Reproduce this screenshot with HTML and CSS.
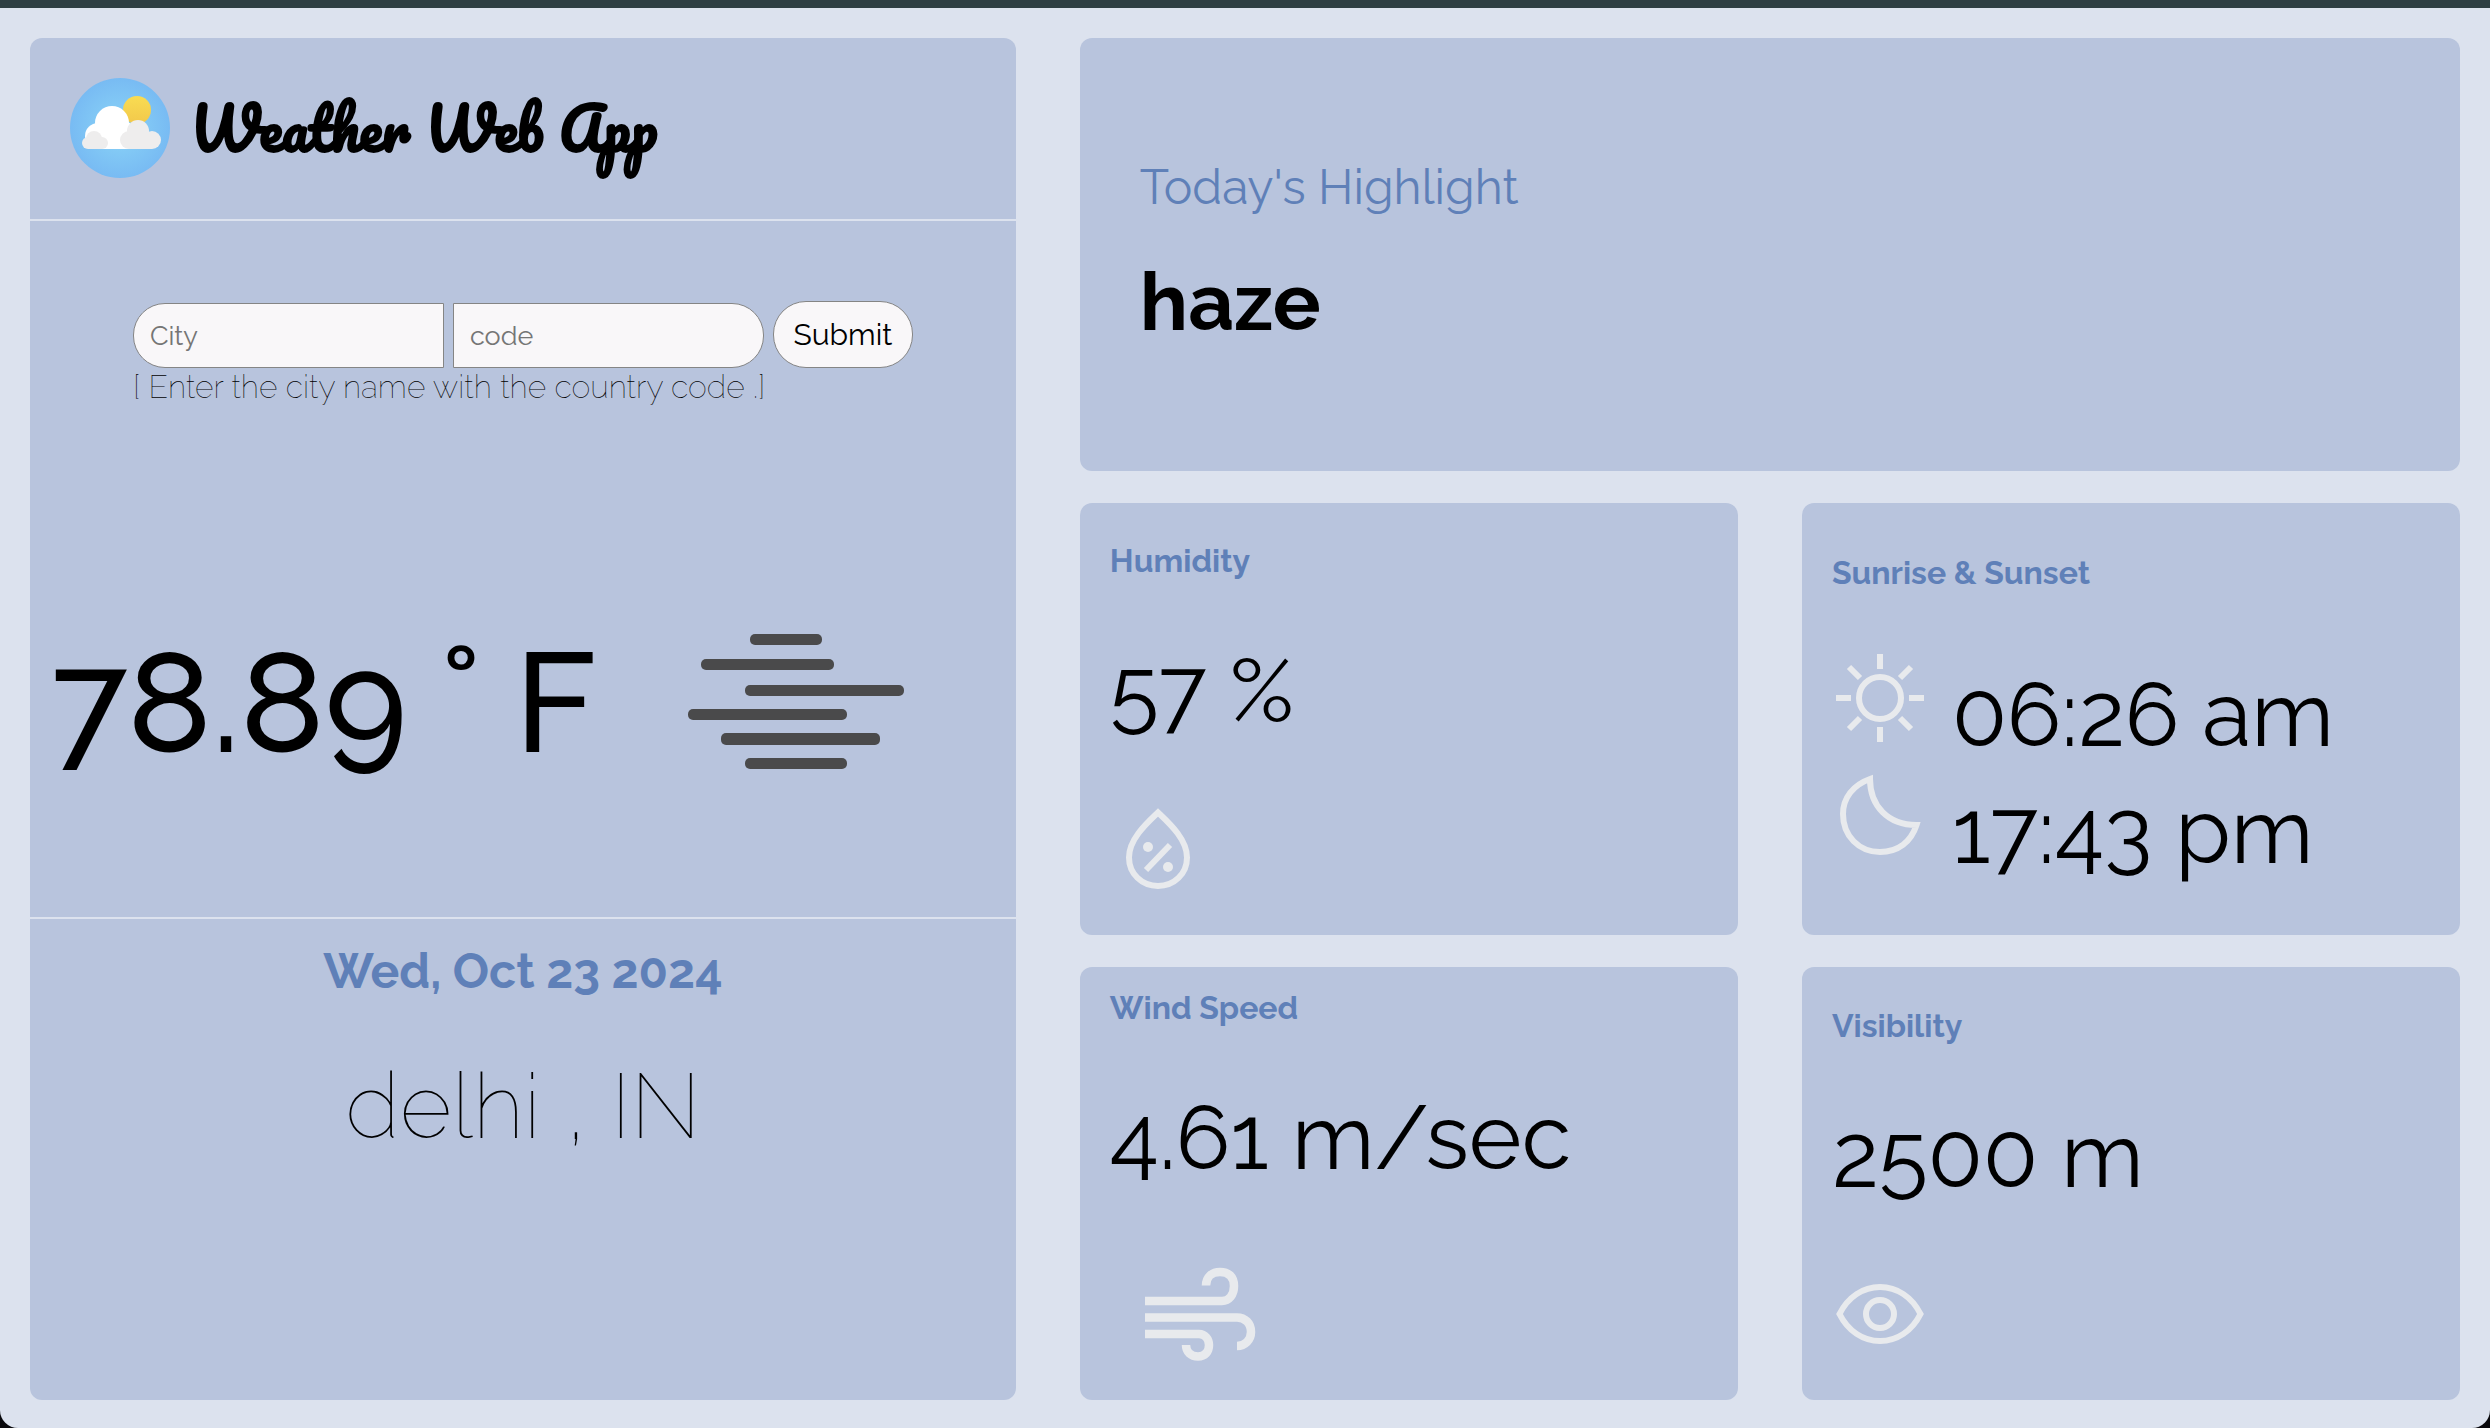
FILE: index.html
```html
<!DOCTYPE html>
<html lang="en">
<head>
<meta charset="utf-8">
<meta name="viewport" content="width=device-width, initial-scale=1">
<title>Weather Web App</title>
<link rel="stylesheet" href="styles.css">
</head>
<body>
<div class="app">
  <main class="dashboard">
    <section class="panel">
      <header class="brand">
        <svg class="brand-logo" viewBox="0 0 100 100" aria-hidden="true">
          <defs>
            <radialGradient id="sky"><stop offset="0" stop-color="#8bd5f7"/><stop offset="1" stop-color="#78bbf3"/></radialGradient>
            <linearGradient id="sun" x1="0" y1="0" x2="0" y2="1"><stop offset="0" stop-color="#f9dc52"/><stop offset="1" stop-color="#f2c84b"/></linearGradient>
          </defs>
          <circle cx="50" cy="50" r="50" fill="url(#sky)"/>
          <circle cx="67" cy="32" r="14" fill="url(#sun)"/>
          <g fill="#fff"><circle cx="42" cy="45" r="17"/><circle cx="28" cy="58" r="13"/><rect x="28" y="45" width="32" height="26"/></g>
          <g fill="#eeeded"><circle cx="24" cy="61" r="8"/><circle cx="18" cy="65" r="6"/><circle cx="32" cy="65" r="6"/><rect x="18" y="62" width="14" height="9"/>
          <circle cx="68" cy="53" r="11"/><circle cx="59" cy="62" r="9"/><circle cx="82" cy="62" r="9"/><rect x="59" y="54" width="23" height="17"/></g>
        </svg>
        <h1 class="brand-name">Weather Web App</h1>
      </header>
      <div class="current">
        <form class="search">
          <div class="search-row">
            <input class="field field-city" type="text" placeholder="City" aria-label="City">
            <input class="field field-code" type="text" placeholder="code" aria-label="Country code">
            <button class="submit" type="button">Submit</button>
          </div>
          <p class="hint">[ Enter the city name with the country code .]</p>
        </form>
        <div class="reading">
          <p class="temperature">78.89 ˚ F</p>
          <svg class="haze-icon" viewBox="0 0 216 136" aria-hidden="true">
            <g fill="#4a4a4b"><rect x="62" y="0" width="72" height="11" rx="5"/><rect x="13" y="25" width="133" height="11" rx="5"/><rect x="57" y="51" width="159" height="11" rx="5"/><rect x="0" y="75" width="159" height="11" rx="5"/><rect x="33" y="99" width="159" height="12" rx="5"/><rect x="57" y="124" width="102" height="11" rx="5"/></g>
          </svg>
        </div>
      </div>
      <div class="place">
        <p class="date">Wed, Oct 23 2024</p>
        <p class="city">delhi , IN</p>
      </div>
    </section>
    <section class="details">
      <article class="card highlight">
        <h2 class="highlight-label">Today's Highlight</h2>
        <p class="highlight-value">haze</p>
      </article>
      <article class="card">
        <h2 class="label">Humidity</h2>
        <p class="value">57 %</p>
        <svg class="icon" viewBox="0 0 96 96" aria-hidden="true">
          <path d="M48 11.500C37 22 19 38 19 56.500C19 73 32 85 48 85S77 73 77 56.500C77 38 59 22 48 11.500Z" fill="none" stroke="#e8eaed" stroke-width="6"/>
          <path d="M36 69L60 44" stroke="#e8eaed" stroke-width="6"/>
          <circle cx="38" cy="46" r="5" fill="#e8eaed"/><circle cx="58" cy="66" r="5" fill="#e8eaed"/>
        </svg>
      </article>
      <article class="card">
        <h2 class="label">Sunrise &amp; Sunset</h2>
        <div class="times">
          <div class="time">
            <svg class="icon" viewBox="0 0 96 96" aria-hidden="true">
              <g fill="none" stroke="#e8eaed" stroke-width="6"><circle cx="48" cy="47" r="21"/><path d="M48 3v15M48 76v15M4 47h15M77 47h15M17 16l11 11M79 16L68 27M17 78l11-11M79 78L68 67"/></g>
            </svg>
            <p class="time-value">06:26 am</p>
          </div>
          <div class="time">
            <svg class="icon" viewBox="0 0 96 96" aria-hidden="true">
              <path d="M38 11C21 17 11 30 11 46C11 68 27 84 48 84C66 84 79 74 84.500 57C56 57 38 38 38 11Z" fill="none" stroke="#e8eaed" stroke-width="6"/>
            </svg>
            <p class="time-value">17:43 pm</p>
          </div>
        </div>
      </article>
      <article class="card">
        <h2 class="label">Wind Speed</h2>
        <p class="value">4.61 m/sec</p>
        <svg class="icon icon-wind" viewBox="0 0 180 132" aria-hidden="true">
          <path d="M35 53H112C119 53 124 47 124 38C124 29 119 24 110 24C102 24 96 29 96 37.500M35 69.500H127C135 69.500 141 75 141 84C141 92 135 98 127 98M35 86H89C95 86 99 91 99 97C99 104 95 108.500 88 108.500C81 108.500 76 104 76 97" fill="none" stroke="#e8eaed" stroke-width="8.500"/>
        </svg>
      </article>
      <article class="card">
        <h2 class="label">Visibility</h2>
        <p class="value">2500 m</p>
        <svg class="icon" viewBox="0 0 96 96" aria-hidden="true">
          <g fill="none" stroke="#e8eaed" stroke-width="6"><path d="M7.500 48C16 31 31 21 48 21S80 31 88.500 48C80 65 65 75 48 75S16 65 7.500 48Z"/><circle cx="48" cy="48" r="14"/></g>
        </svg>
      </article>
    </section>
  </main>
</div>
</body>
</html>
```
FILE: styles.css
```css
* { box-sizing: border-box; }

body {
  margin: 0;
  background: #08080c;
  color: #000;
  font-family: Raleway, Lato, "Open Sans", sans-serif;
  font-variant-numeric: oldstyle-nums;
}

h1, h2, p { margin: 0; }

.app {
  display: flex;
  min-height: 100vh;
  border-top: 8px solid #2e3f43;
  border-radius: 0 0 18px 18px;
  background: #dce2ee;
}

.dashboard {
  flex: 1;
  display: grid;
  grid-template-columns: 5fr 7fr;
  gap: 64px;
  padding: 30px 30px 28px;
}

.panel, .card {
  min-width: 0;
  border-radius: 12px;
  background: #b8c4dd;
}

.panel {
  display: grid;
  grid-template-rows: auto 59fr 41fr;
}

.brand {
  display: flex;
  align-items: center;
  gap: 20px;
  padding: 40px 40px 41px;
  border-bottom: 2px solid #dce2ee;
}

.brand-logo { width: 100px; height: 100px; }

.brand-name {
  font-family: Pacifico, Lato, cursive;
  font-size: 57px;
  font-weight: 700;
  line-height: 100px;
  white-space: nowrap;
}

.current {
  display: flex;
  flex-direction: column;
  align-items: center;
  padding-top: 80px;
}

.search-row {
  display: flex;
  align-items: flex-end;
  gap: 9px;
}

.field, .submit {
  border: 1px solid #858585;
  background: #f9f7f9;
  font-family: inherit;
  color: #000;
}

.field {
  width: 311px;
  height: 65px;
  padding: 0 16px;
  font-size: 27px;
}

.field::placeholder { color: #757575; opacity: 1; }

.field-city { border-radius: 32px 0 0 32px; }
.field-code { border-radius: 0 32px 32px 0; }

.submit {
  width: 140px;
  height: 67px;
  border-radius: 33px;
  padding: 0;
  font-size: 30px;
}

.hint {
  font-size: 32px;
  font-weight: 100;
  line-height: 38px;
}

.reading {
  align-self: stretch;
  display: grid;
  grid-template-columns: 2fr 1fr;
  align-items: center;
  padding: 212px 10px 0 22px;
}

.temperature {
  font-size: 141px;
  font-weight: 500;
  line-height: 168px;
  white-space: nowrap;
}

.haze-icon { width: 216px; height: 136px; }

.place {
  display: flex;
  flex-direction: column;
  align-items: center;
  gap: 51px;
  padding-top: 23px;
  border-top: 2px solid #dce2ee;
}

.date {
  color: #5f80b8;
  font-size: 48px;
  font-weight: 700;
  line-height: 58px;
}

.city {
  font-size: 90px;
  font-weight: 100;
  line-height: 110px;
}

.details {
  display: grid;
  grid-template-columns: 1fr 1fr;
  grid-template-rows: repeat(3, 1fr);
  gap: 32px 64px;
}

.card {
  display: flex;
  flex-direction: column;
  justify-content: center;
  padding: 0 30px;
}

.highlight {
  grid-column: 1 / -1;
  gap: 38px;
  padding: 0 60px;
}

.highlight-label {
  color: #5f80b8;
  font-size: 48px;
  font-weight: 400;
  line-height: 58px;
}

.highlight-value {
  font-size: 80px;
  font-weight: 700;
  line-height: 96px;
}

.label {
  color: #5f80b8;
  font-size: 32px;
  font-weight: 700;
  line-height: 40px;
}

.value, .time-value {
  font-size: 90px;
  white-space: nowrap;
}

.value {
  margin: 54px 0 56px;
  line-height: 110px;
}

.icon { flex: none; width: 96px; height: 96px; }
.icon-wind { width: 180px; height: 132px; }

.times { margin-top: 58px; }

.time {
  display: flex;
  gap: 24px;
  height: 117px;
}

.time-value { line-height: 126px; }
```
